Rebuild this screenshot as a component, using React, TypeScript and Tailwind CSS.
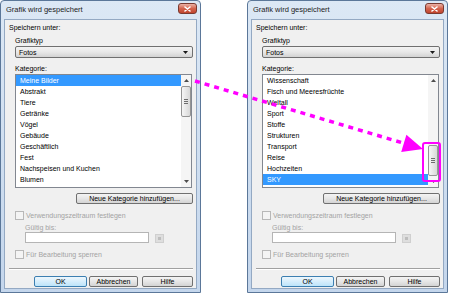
import React from 'react';

const leftItems = ['Meine Bilder', 'Abstrakt', 'Tiere', 'Getränke', 'Vögel', 'Gebäude', 'Geschäftlich', 'Fest', 'Nachspeisen und Kuchen', 'Blumen', 'Sport'];
const rightItems = ['Wissenschaft', 'Fisch und Meeresfrüchte', 'Weltall', 'Sport', 'Stoffe', 'Strukturen', 'Transport', 'Reise', 'Hochzeiten', 'SKY'];

const Btn = ({ label, className = '', primary = false }: { label: string; className?: string; primary?: boolean }) => (
    <div
        className={
            'h-[11px] flex items-center justify-center rounded-[2px] border text-[7px] leading-none text-black ' +
            (primary
                ? 'border-[#3c7fb1] bg-gradient-to-b from-[#eef7fd] via-[#d6eefc] to-[#bde4fa] '
                : 'border-[#707070] bg-gradient-to-b from-[#f4f4f4] via-[#e6e6e6] to-[#d4d4d4] ') +
            className
        }
    >
        {label}
    </div>
);

const Checkbox = ({ label }: { label: string }) => (
    <div className="flex items-center gap-[2px] h-[9px]">
        <div className="w-[9px] h-[9px] border border-[#b8b8b8] bg-[#f4f4f4]"></div>
        <span className="text-[7px] leading-none text-[#a3a3a3]">{label}</span>
    </div>
);

const Scrollbar = ({ atEnd, highlight }: { atEnd: boolean; highlight: boolean }) => (
    <div className="relative w-[10px] flex flex-col bg-[#f5f5f5]">
        <div className="h-[11px] flex items-center justify-center">
            <svg width="5" height="3" viewBox="0 0 5 3"><path d="M2.5 0 L5 3 L0 3 Z" fill="#4d4d4d" /></svg>
        </div>
        <div className={'flex-1 flex flex-col ' + (atEnd ? 'justify-end' : 'justify-start')}>
            <div className="h-[31px] rounded-[2px] border border-[#959595] bg-gradient-to-r from-[#f6f6f6] to-[#d8d8d8] flex flex-col items-center justify-center gap-[1px]">
                <div className="w-[4px] h-[1px] bg-[#6d6d6d]"></div>
                <div className="w-[4px] h-[1px] bg-[#6d6d6d]"></div>
                <div className="w-[4px] h-[1px] bg-[#6d6d6d]"></div>
            </div>
        </div>
        <div className="h-[11px] flex items-center justify-center">
            <svg width="5" height="3" viewBox="0 0 5 3"><path d="M0 0 L5 0 L2.5 3 Z" fill="#4d4d4d" /></svg>
        </div>
        {highlight && (
            <div className="absolute right-[-3px] top-[67px] w-[19px] h-[40px] border-[2px] border-[#ff00ff] rounded-[3px]"></div>
        )}
    </div>
);

const Dialog = ({ items, selected, atEnd, highlight, className = '' }: { items: string[]; selected: number; atEnd: boolean; highlight: boolean; className?: string }) => (
    <div className={'flex flex-col w-[201px] h-[293px] border border-[#5b7799] rounded-t-[4px] bg-gradient-to-b from-[#dce8f5] to-[#c4d6ec] px-[3px] pb-[3px] ' + className}>
        <div className="h-[18px] flex items-start justify-between pl-[2px] pt-[2px]">
            <span className="mt-[3px] text-[7.5px] leading-none text-[#1c1c1c]">Grafik wird gespeichert</span>
            {/* close button */}
            <div className="w-[19px] h-[11px] rounded-[3px] border border-[#7a3a30] bg-gradient-to-b from-[#eab2a6] via-[#d4654f] to-[#c0442d] flex items-center justify-center">
                <svg width="7" height="6" viewBox="0 0 7 6">
                    <path d="M1 1 L6 5 M6 1 L1 5" stroke="#ffffff" strokeWidth="1.6" strokeLinecap="round" />
                </svg>
            </div>
        </div>
        <div className="flex-1 flex flex-col border border-[#94a9c3] bg-[#f0f0f0] pl-[4px] pr-[3px]">
            <div className="mt-[3px] h-[9px] text-[7px] leading-[9px] text-black">Speichern unter:</div>
            <div className="ml-[6px] flex flex-col">
                <div className="mt-[4px] h-[9px] text-[7px] leading-[9px] text-black">Grafiktyp</div>
                <div className="mt-[1px] h-[12px] rounded-[2px] border border-[#707070] bg-gradient-to-b from-[#f3f3f3] via-[#e8e8e8] to-[#d3d3d3] flex items-center justify-between pl-[3px] pr-[4px]">
                    <span className="text-[7px] leading-none text-black">Fotos</span>
                    <svg width="5" height="3" viewBox="0 0 5 3"><path d="M0 0 L5 0 L2.5 3 Z" fill="#1a1a1a" /></svg>
                </div>
                <div className="mt-[6px] h-[9px] text-[7px] leading-[9px] text-black">Kategorie:</div>
                <div className="mt-[1px] mr-[1px] h-[114px] border border-[#828790] bg-white flex">
                    <div className="flex-1 overflow-hidden flex flex-col">
                        {items.map((it, i) => (
                            <div
                                key={it}
                                className={
                                    'h-[11px] shrink-0 pl-[4px] flex items-center text-[7px] leading-none ' +
                                    (i === selected ? 'bg-[#3399ff] text-white' : 'text-black')
                                }
                            >
                                {it}
                            </div>
                        ))}
                    </div>
                    <Scrollbar atEnd={atEnd} highlight={highlight} />
                </div>
                <div className="mt-[5px] flex justify-end">
                    <Btn label="Neue Kategorie hinzufügen..." className="w-[117px]" />
                </div>
                <div className="mt-[7px]">
                    <Checkbox label="Verwendungszeitraum festlegen" />
                </div>
                <div className="ml-[10px] flex flex-col">
                    <div className="mt-[4px] h-[8px] text-[7px] leading-[8px] text-[#a3a3a3]">Gültig bis:</div>
                    <div className="flex items-end gap-[6px]">
                        <div className="w-[124px] h-[11px] border border-[#b5b5b5] bg-white"></div>
                        <div className="w-[9px] h-[9px] border border-[#cfcfcf] bg-[#dedede] flex items-center justify-center">
                            <div className="w-[3px] h-[3px] bg-[#bdbdbd]"></div>
                        </div>
                    </div>
                </div>
                <div className="mt-[7px]">
                    <Checkbox label="Für Bearbeitung sperren" />
                </div>
            </div>
            <div className="mt-[9px] h-[1px] bg-[#a0a0a0] border-b border-white box-content"></div>
            <div className="mt-[6px] flex justify-end">
                <Btn label="OK" primary className="w-[53px]" />
                <Btn label="Abbrechen" className="w-[49px] ml-[2px]" />
                <Btn label="Hilfe" className="w-[51px] ml-[4px]" />
            </div>
        </div>
    </div>
);

export default function App() {
    return (
        <div className="relative w-[450px] h-[296px] bg-white font-['Liberation_Sans',Arial,sans-serif] overflow-hidden">
            <div className="flex">
                <Dialog items={leftItems} selected={0} atEnd={false} highlight={false} />
                <Dialog items={rightItems} selected={9} atEnd={true} highlight={true} className="ml-[46px]" />
            </div>
            {/* dotted arrow from the top of the left scrollbar to the thumb on the right */}
            <svg className="absolute inset-0 pointer-events-none" width="450" height="296" viewBox="0 0 450 296">
                <line x1="195" y1="81" x2="404" y2="143.3" stroke="#ff00ff" strokeWidth="3.5" strokeDasharray="5 5" />
                <polygon points="423,149 401.2,151.9 406.4,134.7" fill="#ff00ff" />
            </svg>
        </div>
    );
}
